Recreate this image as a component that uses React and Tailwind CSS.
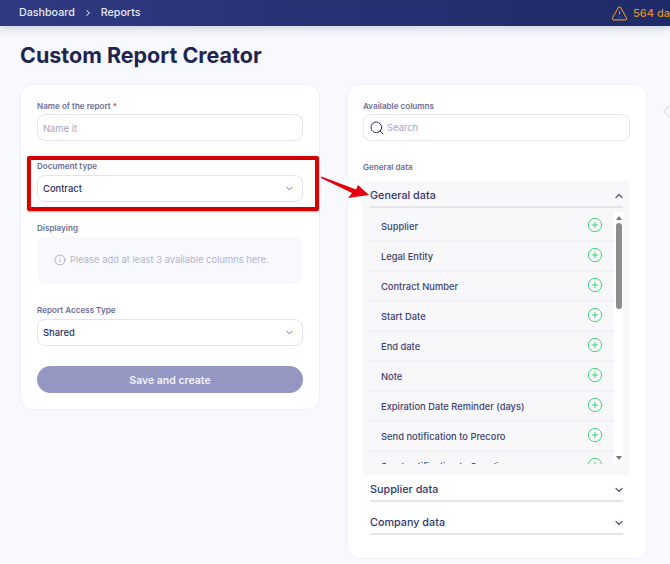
import { AlertTriangle, ChevronDown, ChevronRight, ChevronUp, Info, PlusCircleIcon, Search } from "lucide-react";

const FONT = { fontFamily: "Inter, sans-serif" };

const COLUMNS = [
  "Supplier",
  "Legal Entity",
  "Contract Number",
  "Start Date",
  "End date",
  "Note",
  "Expiration Date Reminder (days)",
  "Send notification to Precoro",
  "Send notification to Supplier",
];

function Label({ children }) {
  return <div className="h-[18px] text-[8.1px] font-semibold leading-[20px] text-[#6b6f96]">{children}</div>;
}

function SelectBox({ value }) {
  return (
    <div className="mt-[1px] flex h-[27px] items-center justify-between rounded-lg border border-[#e3e4ef] bg-white pl-[5px] pr-[7px] text-[9.4px] font-medium text-[#2b3163]">
      <span className="mt-[1px]">{value}</span>
      <ChevronDown size={11} className="text-[#62668f]" />
    </div>
  );
}

function ColumnRow({ name }) {
  return (
    <div className="flex h-[30px] shrink-0 items-center justify-between border-b-2 border-[#f1f1f6] pl-[14px] pr-[11px]">
      <span className="mt-[3px] whitespace-nowrap text-[9.35px] font-medium text-[#3d4270]">{name}</span>
      <PlusCircleIcon size={16} strokeWidth={1.5} className="mb-[3px] text-[#3fd37c]" />
    </div>
  );
}

function Scrollbar() {
  return (
    <div className="flex w-[9px] shrink-0 flex-col items-center bg-white">
      <div className="mt-[4px] h-0 w-0 border-x-[3px] border-b-[4px] border-x-transparent border-b-[#777]" />
      <div className="mt-[3px] h-[86px] w-[6px] rounded-full bg-[#8c8c8c]" />
      <div className="mt-auto mb-[4px] h-0 w-0 border-x-[3px] border-t-[4px] border-x-transparent border-t-[#777]" />
    </div>
  );
}

function CollapsedSection({ title, className }) {
  return (
    <div className={`mx-[7px] flex items-center justify-between border-b-2 border-[#e4e4e9] pt-[5px] text-[10.8px] font-medium text-[#32376b] ${className}`}>
      <span>{title}</span>
      <ChevronDown size={12} strokeWidth={2.5} className="-mr-[2px] text-[#5a5d78]" />
    </div>
  );
}

export default function App() {
  return (
    <div style={FONT} className="relative h-[564px] w-[670px] overflow-hidden bg-[#f8f9fe]">
      {/* Top bar */}
      <header className="flex h-[26px] items-center justify-between bg-gradient-to-r from-[#2f3a82] to-[#1f2a68] pl-[19px] shadow-[0_3px_8px_rgba(40,50,110,0.2)]">
        <div className="flex items-center text-[10.7px] font-medium text-[#e6e8f4]">
          <span>Dashboard</span>
          <ChevronRight size={10} strokeWidth={2.5} className="ml-[8px] mr-[8px]" />
          <span>Reports</span>
        </div>
        <div className="flex w-[59px] shrink-0 items-center gap-[5px] overflow-hidden whitespace-nowrap text-[11px] font-medium text-[#dc8f2b]">
          <AlertTriangle size={17} strokeWidth={1.5} className="shrink-0" />
          <span>564 days</span>
        </div>
      </header>

      <h1 className="ml-[20px] mt-[14px] h-[44px] text-[21.5px] font-bold leading-[30px] text-[#1f2550]">Custom Report Creator</h1>

      <div className="flex items-start gap-[27px] pl-[20px]">
        {/* Left card */}
        <section className="h-[326px] w-[300px] shrink-0 rounded-xl border border-[#f0f1f8] bg-white px-[16px] pt-[11px]">
          <Label>
            Name of the report <span className="text-[#ef4444]">*</span>
          </Label>
          <div className="flex h-[27px] items-center rounded-lg border border-[#e3e4ef] pl-[5px] pt-[3px] text-[9.4px] text-[#a4a6bd]">Name it</div>
          <div className="mt-[15px]">
            <Label>Document type</Label>
            <SelectBox value="Contract" />
          </div>
          <div className="mt-[16px]">
            <Label>Displaying</Label>
            <div className="mt-[1px] flex h-[47px] items-center gap-[4px] rounded-lg bg-[#f8f9fe] pl-[17px] text-[9.4px] text-[#b3b5ca]">
              <Info size={12} strokeWidth={1.5} className="mb-[2px] text-[#9a9cb6]" />
              <span>Please add at least 3 available columns here.</span>
            </div>
          </div>
          <div className="mt-[16px]">
            <Label>Report Access Type</Label>
            <SelectBox value="Shared" />
          </div>
          <button className="mt-[20px] h-[27px] w-full rounded-full bg-[#9397c2] pt-[2px] text-[10.5px] font-semibold text-[#f2f3fa]">Save and create</button>
        </section>

        {/* Right card */}
        <section className="h-[475px] w-[300px] shrink-0 rounded-xl border border-[#f0f1f8] bg-white pl-[15px] pr-[16px] pt-[11px]">
          <Label>Available columns</Label>
          <div className="flex h-[27px] items-center gap-[2px] rounded-lg border border-[#e3e4ef] pl-[5px] text-[9.4px] text-[#a4a6bd]">
            <Search size={16} strokeWidth={1.5} className="text-[#2b3163]" />
            <span className="mt-[2px]">Search</span>
          </div>
          <div className="mt-[16px] h-[24px] text-[8.1px] font-semibold leading-[20px] text-[#6b6f96]">General data</div>

          <div className="h-[294px] bg-[#f8f8fb]">
            <div className="mx-[7px] flex h-[27px] items-center justify-between border-b-2 border-[#e4e4e9] pt-[5px] text-[10.8px] font-medium text-[#32376b]">
              <span>General data</span>
              <ChevronUp size={12} strokeWidth={2.5} className="-mr-[2px] text-[#5a5d78]" />
            </div>
            <div className="ml-[4px] mr-[7px] mt-[4px] flex h-[252px]">
              <div className="flex min-w-0 flex-1 flex-col overflow-hidden">
                {COLUMNS.map((c) => (
                  <ColumnRow key={c} name={c} />
                ))}
              </div>
              <Scrollbar />
            </div>
          </div>

          <CollapsedSection title="Supplier data" className="h-[27px]" />
          <CollapsedSection title="Company data" className="mt-[6px] h-[27px]" />
        </section>

        {/* Side handle */}
        <div className="-ml-[9px] mt-[23px] h-[9px] w-[9px] shrink-0 rotate-45 border-b border-l border-[#d9dae6]" />
      </div>

      {/* Annotation */}
      <div className="absolute left-[27px] top-[156px] h-[55px] w-[292px] rounded-[2px] border-[4px] border-[#d60000] shadow-[0_1px_2px_rgba(0,0,0,0.3)]" />
      <svg className="absolute left-[319px] top-[174px]" width="52" height="30" viewBox="0 0 52 30">
        <path d="M2.5 2.5 L37 15.5 L39 11 L50 21 L29 24 L33 19 L2 4 Z" fill="#e3000f" />
      </svg>
    </div>
  );
}
